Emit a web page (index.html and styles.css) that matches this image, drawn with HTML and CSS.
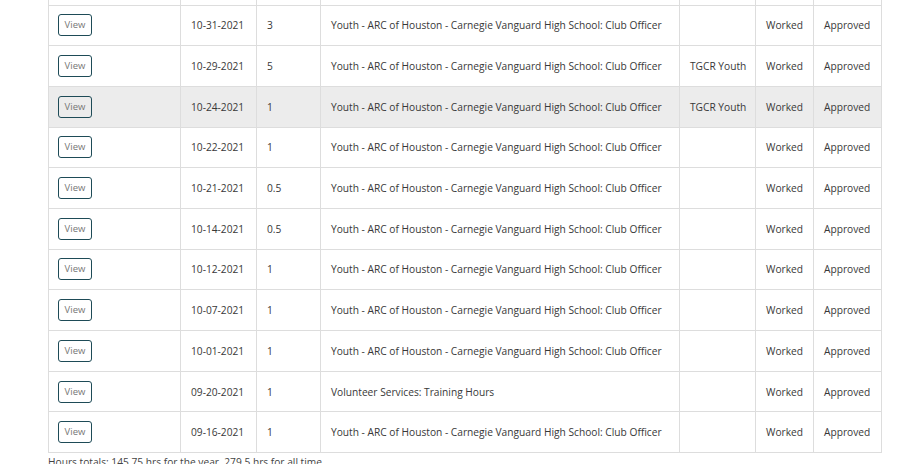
FILE: index.html
```html
<!DOCTYPE html>
<html>
<head>
<meta charset="utf-8">
<link rel="stylesheet" href="styles.css">
</head>
<body>
<div class="page">
<table class="hours">
<colgroup>
<col class="c-btn"><col class="c-date"><col class="c-hrs"><col class="c-desc"><col class="c-grp"><col class="c-type"><col class="c-status">
</colgroup>
<tbody>
<tr class="partial"><td></td><td></td><td></td><td></td><td></td><td></td><td></td></tr>
<tr><td class="act"><button class="view">View</button></td><td>10-31-2021</td><td>3</td><td>Youth - ARC of Houston - Carnegie Vanguard High School: Club Officer</td><td></td><td>Worked</td><td>Approved</td></tr>
<tr><td class="act"><button class="view">View</button></td><td>10-29-2021</td><td>5</td><td>Youth - ARC of Houston - Carnegie Vanguard High School: Club Officer</td><td>TGCR Youth</td><td>Worked</td><td>Approved</td></tr>
<tr class="hover"><td class="act"><button class="view">View</button></td><td>10-24-2021</td><td>1</td><td>Youth - ARC of Houston - Carnegie Vanguard High School: Club Officer</td><td>TGCR Youth</td><td>Worked</td><td>Approved</td></tr>
<tr><td class="act"><button class="view">View</button></td><td>10-22-2021</td><td>1</td><td>Youth - ARC of Houston - Carnegie Vanguard High School: Club Officer</td><td></td><td>Worked</td><td>Approved</td></tr>
<tr><td class="act"><button class="view">View</button></td><td>10-21-2021</td><td>0.5</td><td>Youth - ARC of Houston - Carnegie Vanguard High School: Club Officer</td><td></td><td>Worked</td><td>Approved</td></tr>
<tr><td class="act"><button class="view">View</button></td><td>10-14-2021</td><td>0.5</td><td>Youth - ARC of Houston - Carnegie Vanguard High School: Club Officer</td><td></td><td>Worked</td><td>Approved</td></tr>
<tr><td class="act"><button class="view">View</button></td><td>10-12-2021</td><td>1</td><td>Youth - ARC of Houston - Carnegie Vanguard High School: Club Officer</td><td></td><td>Worked</td><td>Approved</td></tr>
<tr><td class="act"><button class="view">View</button></td><td>10-07-2021</td><td>1</td><td>Youth - ARC of Houston - Carnegie Vanguard High School: Club Officer</td><td></td><td>Worked</td><td>Approved</td></tr>
<tr><td class="act"><button class="view">View</button></td><td>10-01-2021</td><td>1</td><td>Youth - ARC of Houston - Carnegie Vanguard High School: Club Officer</td><td></td><td>Worked</td><td>Approved</td></tr>
<tr><td class="act"><button class="view">View</button></td><td>09-20-2021</td><td>1</td><td>Volunteer Services: Training Hours</td><td></td><td>Worked</td><td>Approved</td></tr>
<tr><td class="act"><button class="view">View</button></td><td>09-16-2021</td><td>1</td><td>Youth - ARC of Houston - Carnegie Vanguard High School: Club Officer</td><td></td><td>Worked</td><td>Approved</td></tr>
</tbody>
</table>
<p class="totals">Hours totals: 145.75 hrs for the year, 279.5 hrs for all time</p>
</div>
</body>
</html>
```
FILE: styles.css
```css
html, body {
  margin: 0;
  padding: 0;
  background: #ffffff;
}
body {
  font-family: "Open Sans", "Noto Sans", sans-serif;
  font-size: 10.2px;
  color: #383838;
}
.page {
  padding: 0 36px 0 48px;
}
.hours {
  border-collapse: collapse;
  table-layout: fixed;
  width: 833px;
}
.c-btn { width: 132px; }
.c-date { width: 76px; }
.c-hrs { width: 64px; }
.c-desc { width: 359px; }
.c-grp { width: 76px; }
.c-type { width: 58px; }
.c-status { width: 68px; }
.hours td {
  border: 1px solid #dddddd;
  padding: 0 0 0 10px;
  height: 40.7px;
  vertical-align: middle;
  white-space: nowrap;
  overflow: hidden;
  box-sizing: border-box;
}
.hours td.act {
  padding-left: 9px;
}
.hours tr.partial td {
  height: 5px;
  border-top: none;
}
.hours tr.hover td {
  background: #ececec;
}
.view {
  font-family: "Open Sans", "Noto Sans", sans-serif;
  font-size: 9.5px;
  color: #777777;
  background: transparent;
  border: 1px solid #1e4b57;
  border-radius: 3px;
  width: 34px;
  height: 22px;
  padding: 0;
  line-height: 18px;
}
.totals {
  margin: 2px 0 0 0;
  font-size: 10.2px;
  color: #444444;
}
```
